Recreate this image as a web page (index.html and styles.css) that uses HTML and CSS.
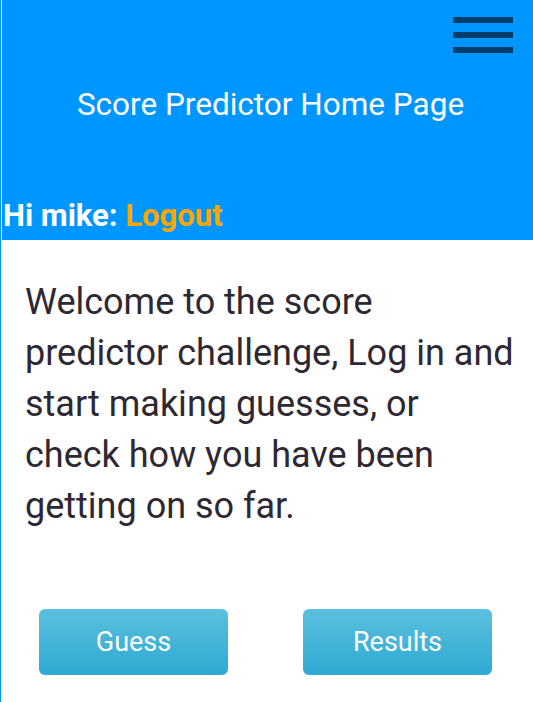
FILE: index.html
```html
<!DOCTYPE html>
<html>
<head>
<meta charset="utf-8">
<link rel="stylesheet" href="styles.css">
</head>
<body>
<div class="page">
  <header class="header">
    <div class="menu-row">
      <button class="menu-btn" aria-label="Menu">
        <span class="bar"></span><span class="bar"></span><span class="bar"></span>
      </button>
    </div>
    <h1 class="title">Score Predictor Home Page</h1>
    <div class="user">Hi mike: <a class="logout" href="#">Logout</a></div>
  </header>
  <main class="content">
    <p class="intro">Welcome to the score predictor challenge, Log in and start making guesses, or check how you have been getting on so far.</p>
    <div class="actions">
      <a class="btn" href="#">Guess</a>
      <a class="btn" href="#">Results</a>
    </div>
  </main>
</div>
</body>
</html>
```
FILE: styles.css
```css
html, body {
  margin: 0;
  padding: 0;
  background: #ffffff;
}
body {
  font-family: Roboto, "Noto Sans", sans-serif;
}
.page {
  border-left: 1px solid #0096ff;
  padding-left: 1px;
  min-height: 702px;
  box-sizing: border-box;
}
.header {
  background: #0096ff;
  height: 240px;
  display: flex;
  flex-direction: column;
}
.menu-row {
  display: flex;
  justify-content: flex-end;
  padding: 17px 20px 0 0;
}
.menu-btn {
  display: flex;
  flex-direction: column;
  gap: 9px;
  background: none;
  border: 0;
  padding: 0;
}
.bar {
  display: block;
  width: 60px;
  height: 6px;
  background: #003e6b;
}
.title {
  margin: 32px 0 0;
  padding-left: 6px;
  font-weight: 400;
  font-size: 31.5px;
  color: #ffffff;
  text-align: center;
  line-height: 40px;
}
.user {
  margin-top: auto;
  padding: 0 0 6px 1px;
  font-weight: 700;
  font-size: 31px;
  line-height: 36px;
  color: #ffffff;
}
.logout {
  color: #ffa500;
  text-decoration: none;
}
.content {
  padding: 0 18px 0 23px;
}
.intro {
  margin: 37px 0 0;
  font-size: 36px;
  line-height: 51px;
  color: #2d2832;
}
.actions {
  display: flex;
  justify-content: space-between;
  padding: 0 23px 0 14px;
  margin-top: 77px;
}
.btn {
  width: 189px;
  height: 66px;
  display: flex;
  align-items: center;
  justify-content: center;
  border-radius: 6px;
  background: linear-gradient(#5bc0de, #2ea9d3);
  color: #ffffff;
  font-size: 27px;
  text-decoration: none;
}
```
